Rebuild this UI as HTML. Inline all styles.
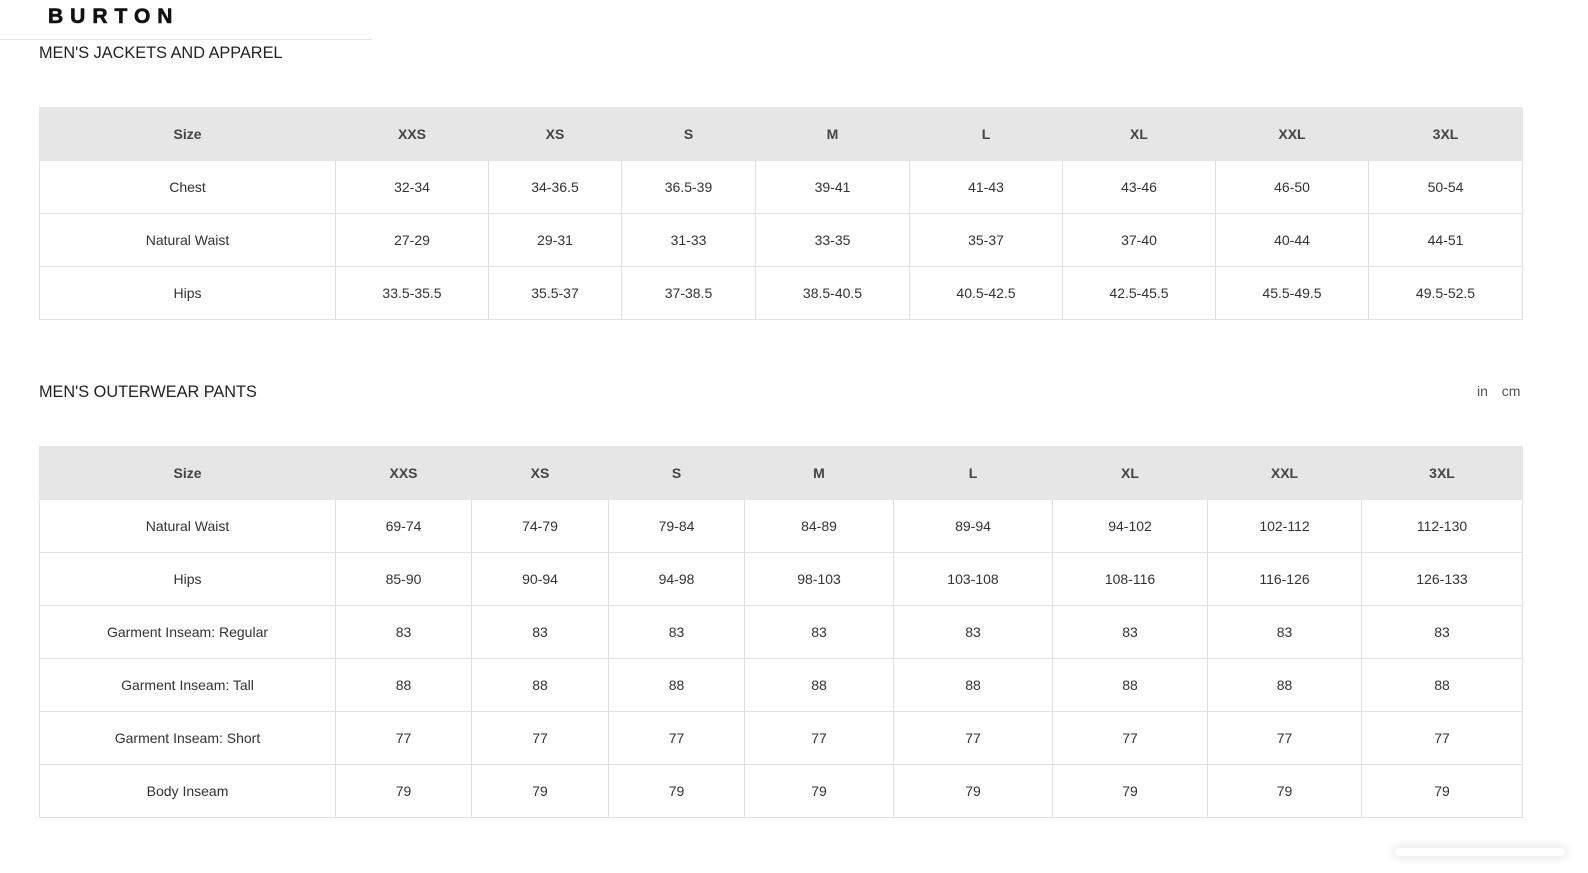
<!DOCTYPE html>
<html><head><meta charset="utf-8"><style>
body{margin:0;width:1588px;height:873px;background:#fff;font-family:"Liberation Sans",Arial,sans-serif;position:relative;overflow:hidden}
.logo{position:absolute;left:48px;top:5px;font-size:21px;font-weight:900;letter-spacing:7px;color:#111;-webkit-text-stroke:0.6px #111}
.hr{position:absolute;left:0;top:39px;width:372px;height:1px;background:#e4e4e4}
h2{position:absolute;left:39px;margin:0;font-weight:normal;font-size:16.3px;color:#222}
table{position:absolute;left:39px;border-collapse:collapse;table-layout:fixed;width:1483px}
td,th{border:1px solid #e0e0e0;height:52px;text-align:center;font-size:14px;color:#333;padding:0}
th{background:#e6e6e6;font-weight:bold;color:#444;border-color:#e6e6e6;font-size:14px}
.units{position:absolute;top:383px;left:1477px;font-size:14px;color:#555;word-spacing:10px}
.shadow{position:absolute;left:1395px;top:848px;width:170px;height:8px;box-shadow:0 0 8px 3px rgba(0,0,0,.08);border-radius:4px}
</style></head><body>
<div class="logo">BURTON</div>
<div class="hr"></div>
<h2 style="top:44px">MEN'S JACKETS AND APPAREL</h2>
<table style="top:107px">
<colgroup><col style="width:296px"><col style="width:153px"><col style="width:133px"><col style="width:134px"><col style="width:154px"><col style="width:153px"><col style="width:153px"><col style="width:153px"><col style="width:154px"></colgroup>
<tr><th>Size</th><th>XXS</th><th>XS</th><th>S</th><th>M</th><th>L</th><th>XL</th><th>XXL</th><th>3XL</th></tr>
<tr><td>Chest</td><td>32-34</td><td>34-36.5</td><td>36.5-39</td><td>39-41</td><td>41-43</td><td>43-46</td><td>46-50</td><td>50-54</td></tr>
<tr><td>Natural Waist</td><td>27-29</td><td>29-31</td><td>31-33</td><td>33-35</td><td>35-37</td><td>37-40</td><td>40-44</td><td>44-51</td></tr>
<tr><td>Hips</td><td>33.5-35.5</td><td>35.5-37</td><td>37-38.5</td><td>38.5-40.5</td><td>40.5-42.5</td><td>42.5-45.5</td><td>45.5-49.5</td><td>49.5-52.5</td></tr>
</table>
<h2 style="top:383px">MEN'S OUTERWEAR PANTS</h2>
<div class="units">in cm</div>
<table style="top:446px">
<colgroup><col style="width:296px"><col style="width:136px"><col style="width:137px"><col style="width:136px"><col style="width:149px"><col style="width:159px"><col style="width:155px"><col style="width:154px"><col style="width:161px"></colgroup>
<tr><th>Size</th><th>XXS</th><th>XS</th><th>S</th><th>M</th><th>L</th><th>XL</th><th>XXL</th><th>3XL</th></tr>
<tr><td>Natural Waist</td><td>69-74</td><td>74-79</td><td>79-84</td><td>84-89</td><td>89-94</td><td>94-102</td><td>102-112</td><td>112-130</td></tr>
<tr><td>Hips</td><td>85-90</td><td>90-94</td><td>94-98</td><td>98-103</td><td>103-108</td><td>108-116</td><td>116-126</td><td>126-133</td></tr>
<tr><td>Garment Inseam: Regular</td><td>83</td><td>83</td><td>83</td><td>83</td><td>83</td><td>83</td><td>83</td><td>83</td></tr>
<tr><td>Garment Inseam: Tall</td><td>88</td><td>88</td><td>88</td><td>88</td><td>88</td><td>88</td><td>88</td><td>88</td></tr>
<tr><td>Garment Inseam: Short</td><td>77</td><td>77</td><td>77</td><td>77</td><td>77</td><td>77</td><td>77</td><td>77</td></tr>
<tr><td>Body Inseam</td><td>79</td><td>79</td><td>79</td><td>79</td><td>79</td><td>79</td><td>79</td><td>79</td></tr>
</table>
<div class="shadow"></div>
</body></html>
